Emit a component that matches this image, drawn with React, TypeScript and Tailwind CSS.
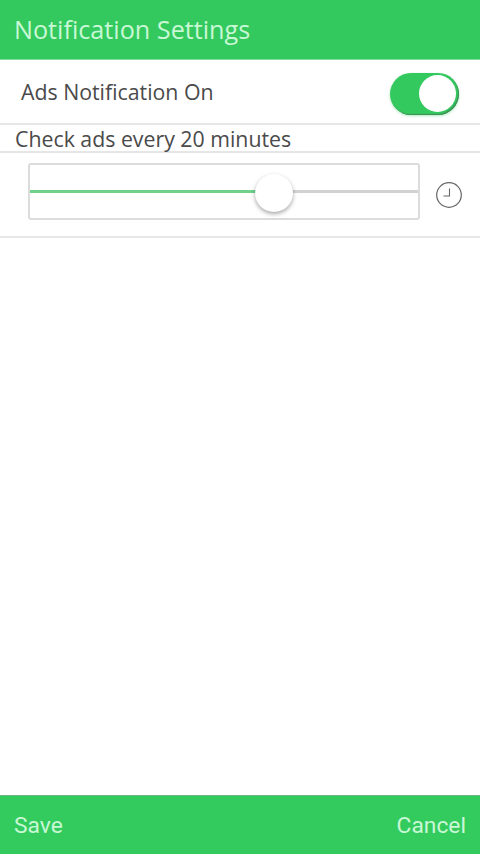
// Notification settings screen with ads toggle and check interval slider.
import React from "react";

export default function App() {
  return (
    <div className="w-[480px] h-[854px] flex flex-col bg-white font-['Open_Sans',sans-serif] text-[#444444] overflow-hidden">
      {/* Header */}
      <div className="h-[60px] flex items-center px-[14px] bg-[#34c95e] border-b border-[#7fdc9a] text-[#c8f8d5] text-[25.2px]">
        Notification Settings
      </div>

      {/* Ads toggle row */}
      <div className="h-[65px] flex items-center justify-between pl-[21px] pr-[21px] pt-[4px] border-b-2 border-[#e6e6e6]">
        <span className="text-[21.3px] text-[#4a4a4a] mb-[4px]">Ads Notification On</span>
        <div className="w-[69px] h-[42px] flex justify-end items-center rounded-full bg-[#34c95e] p-[2px] shadow-[inset_-1px_-1px_1px_#3f8a58,0_1px_3px_rgba(52,201,94,0.4)]">
          <div className="w-[37px] h-[37px] rounded-full bg-white mr-[1px]" />
        </div>
      </div>

      {/* Interval label */}
      <div className="h-[28px] flex items-center pl-[15px] pt-[2px] border-b-2 border-[#e6e6e6] text-[21.3px] text-[#4a4a4a]">
        Check ads every 20 minutes
      </div>

      {/* Slider row */}
      <div className="h-[85px] flex items-start pt-[10px] pl-[28px] border-b-2 border-[#e8e8e8]">
        <div className="relative w-[392px] h-[57px] flex items-center rounded-[3px] border-2 border-[#dcdcdc]">
          <div className="w-[226px] h-[3px] -mt-[1px] bg-[#6fd18c]" />
          <div className="flex-1 h-[3px] -mt-[1px] bg-[#d2d2d2]" />
          <div className="absolute left-[225px] top-[9px] w-[38px] h-[38px] rounded-full bg-white shadow-[0_2px_4px_rgba(0,0,0,0.35)]" />
        </div>
        <svg className="ml-[16px] mt-[19px]" width="26" height="26" viewBox="0 0 26 26" fill="none" stroke="#666666">
          <circle cx="13" cy="13" r="12.3" strokeWidth="1.2" />
          <path d="M13.5 6.5V14H7.5" strokeWidth="1.1" />
        </svg>
      </div>

      <div className="flex-1" />

      {/* Footer */}
      <div className="h-[59px] flex items-center justify-between px-[14px] pt-[3px] bg-[#34cb5e] border-t border-[#6fb585] font-['Roboto',sans-serif] text-[#c8f8d5] text-[22.8px]">
        <span>Save</span>
        <span>Cancel</span>
      </div>
    </div>
  );
}
